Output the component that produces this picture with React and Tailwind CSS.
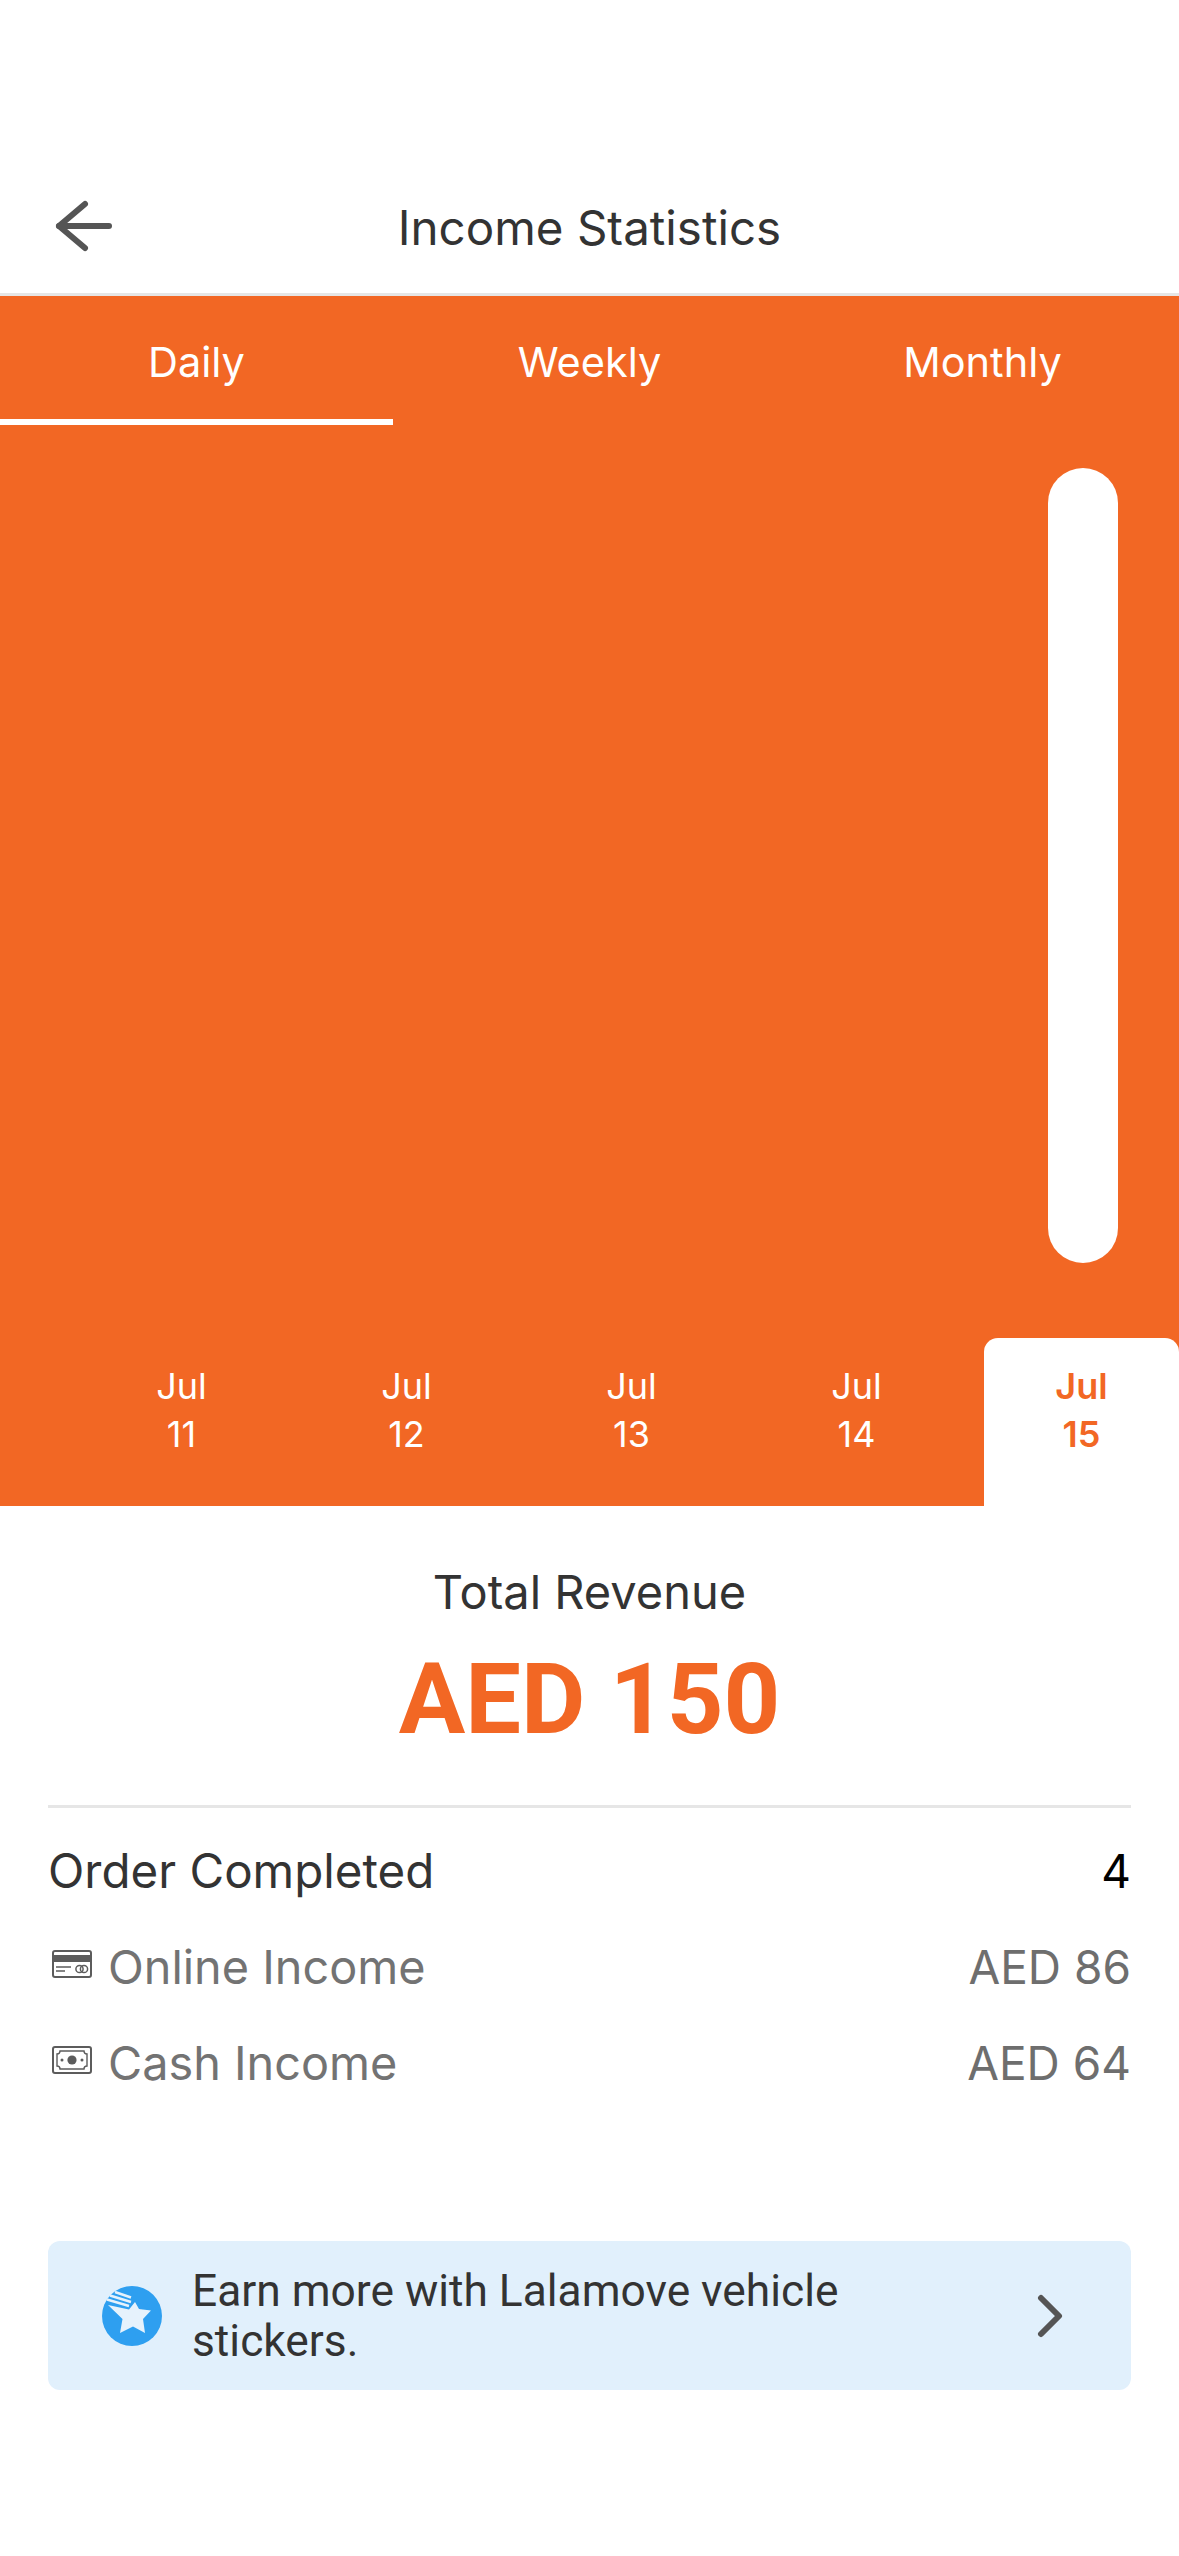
const DAYS = [
  { month: 'Jul', day: 11 },
  { month: 'Jul', day: 12 },
  { month: 'Jul', day: 13 },
  { month: 'Jul', day: 14 },
  { month: 'Jul', day: 15, active: true },
]

function BackArrow() {
  return (
    <svg width="58" height="52" viewBox="0 0 58 52" fill="none" stroke="#555555" strokeWidth="6" strokeLinecap="round" strokeLinejoin="round">
      <path d="M30 4 L4 26 L30 48" />
      <path d="M4 26 H54" />
    </svg>
  )
}

function CardIcon() {
  return (
    <svg width="40" height="28" viewBox="0 0 40 28" fill="none">
      <rect x="1" y="1" width="38" height="26" rx="2" stroke="#5c5c5c" strokeWidth="2" />
      <rect x="1" y="5" width="38" height="7" fill="#5c5c5c" />
      <path d="M4 17 H19 M4 21 H13" stroke="#5c5c5c" strokeWidth="1.6" />
      <circle cx="27.5" cy="19" r="3.6" stroke="#5c5c5c" strokeWidth="1.5" />
      <circle cx="32" cy="19" r="3.6" stroke="#5c5c5c" strokeWidth="1.5" />
    </svg>
  )
}

function CashIcon() {
  return (
    <svg width="40" height="28" viewBox="0 0 40 28" fill="none">
      <rect x="1" y="1" width="38" height="26" rx="2" stroke="#5c5c5c" strokeWidth="2" />
      <path d="M8 5 H32 Q32 8 35 8 V20 Q32 20 32 23 H8 Q8 20 5 20 V8 Q8 8 8 5 Z" stroke="#5c5c5c" strokeWidth="1.4" />
      <circle cx="20" cy="14" r="4.6" fill="#5c5c5c" />
      <circle cx="10" cy="14" r="1.5" fill="#5c5c5c" />
      <circle cx="30" cy="14" r="1.5" fill="#5c5c5c" />
    </svg>
  )
}

function StarBadge() {
  return (
    <svg width="60" height="60" viewBox="0 0 60 60">
      <circle cx="30" cy="30" r="30" fill="#2e9ff0" />
      <path d="M33 16 L37 23 L49 24.5 L41 33 L43 47 L31 40.5 L18 47 L20.5 33 L6 19 L27 23.5 Z" fill="#e6f2fc" />
      <path d="M13 6 L29 11.5 M8 9.5 L29 16 M5 13.5 L27 20" stroke="#e6f2fc" strokeWidth="2.4" />
    </svg>
  )
}

function IncomeRow({ icon, label, value, className }) {
  return (
    <div className={`flex items-center justify-between text-[#737373] leading-[56px] ${className}`}>
      <div className="flex items-center text-[46.8px]">
        <div className="w-[60px] pl-1 -mt-[6px]">{icon}</div>
        <span>{label}</span>
      </div>
      <span className="text-[46px] text-[#6e6e6e]">{value}</span>
    </div>
  )
}

export default function App() {
  return (
    <div className="w-[1179px] h-[2556px] bg-white overflow-hidden font-['Inter',sans-serif]">
      <header className="relative h-[296px] border-b-[3px] border-[#e6e6e6] flex items-end justify-center pb-[37px]">
        <div className="absolute left-[55px] top-[200px]">
          <BackArrow />
        </div>
        <h1 className="text-[47.5px] leading-[56px] text-[#333333]">Income Statistics</h1>
      </header>

      <section className="bg-[#f26724] h-[1210px] flex flex-col">
        <div className="flex h-[129px] text-white text-[41.5px]">
          <div className="w-[393px] border-b-[6px] border-white flex justify-center pt-[41px] leading-[50px]">Daily</div>
          <div className="w-[393px] flex justify-center pt-[41px] leading-[50px]">Weekly</div>
          <div className="w-[393px] flex justify-center pt-[41px] leading-[50px]">Monthly</div>
        </div>

        <div className="flex justify-end pt-[43px] pr-[61px] h-[913px]">
          <div className="w-[70px] h-[795px] bg-white rounded-full" />
        </div>

        <div className="flex justify-end gap-[30px] h-[168px]">
          {DAYS.map((d) => (
            <div
              key={d.day}
              className={`w-[195px] flex flex-col items-center pt-[24px] text-[36px] leading-[48px] ${
                d.active ? 'bg-white text-[#f26724] font-semibold rounded-t-[14px]' : 'text-white'
              }`}
            >
              <span>{d.month}</span>
              <span>{d.day}</span>
            </div>
          ))}
        </div>
      </section>

      <section className="px-[48px]">
        <div className="flex flex-col items-center border-b-[3px] border-[#e6e6e6] h-[302px] pt-[58px]">
          <div className="text-[47px] leading-[56px] text-[#333333]">Total Revenue</div>
          <div className="mt-[23px] text-[99px] leading-[112px] font-bold text-[#f26724] font-['Roboto',sans-serif]">AED 150</div>
        </div>

        <div className="flex items-center justify-between mt-[35px] leading-[56px]">
          <span className="text-[47.5px] text-[#333333]">Order Completed</span>
          <span className="text-[46px] text-black">4</span>
        </div>
        <IncomeRow icon={<CardIcon />} label="Online Income" value="AED 86" className="mt-[40px]" />
        <IncomeRow icon={<CashIcon />} label="Cash Income" value="AED 64" className="mt-[40px]" />

        <div className="mt-[150px] h-[149px] bg-[#e1f0fc] rounded-[12px] flex items-center pl-[54px] pr-[68px]">
          <StarBadge />
          <p className="ml-[30px] flex-1 pr-[110px] text-[44.3px] leading-[50px] text-[#333333] font-['Roboto',sans-serif]">Earn more with Lalamove vehicle stickers.</p>
          <svg width="26" height="44" viewBox="0 0 26 44" fill="none" stroke="#555555" strokeWidth="6" strokeLinecap="round" strokeLinejoin="round">
            <path d="M4 4 L22 22 L4 40" />
          </svg>
        </div>
      </section>
    </div>
  )
}
